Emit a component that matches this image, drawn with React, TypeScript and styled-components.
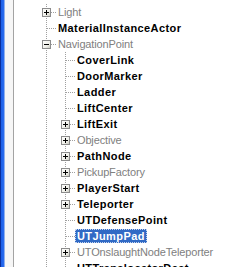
import styled, { createGlobalStyle } from 'styled-components'

interface Node {
  depth: number
  label: string
  bold?: boolean
  toggle?: 'plus' | 'minus'
  selected?: boolean
}

const nodes: Node[] = [
  { depth: 0, label: 'Light', toggle: 'plus' },
  { depth: 0, label: 'MaterialInstanceActor', bold: true },
  { depth: 0, label: 'NavigationPoint', toggle: 'minus' },
  { depth: 1, label: 'CoverLink', bold: true },
  { depth: 1, label: 'DoorMarker', bold: true },
  { depth: 1, label: 'Ladder', bold: true },
  { depth: 1, label: 'LiftCenter', bold: true },
  { depth: 1, label: 'LiftExit', bold: true, toggle: 'plus' },
  { depth: 1, label: 'Objective', toggle: 'plus' },
  { depth: 1, label: 'PathNode', bold: true, toggle: 'plus' },
  { depth: 1, label: 'PickupFactory', toggle: 'plus' },
  { depth: 1, label: 'PlayerStart', bold: true, toggle: 'plus' },
  { depth: 1, label: 'Teleporter', bold: true, toggle: 'plus' },
  { depth: 1, label: 'UTDefensePoint', bold: true },
  { depth: 1, label: 'UTJumpPad', bold: true, selected: true },
  { depth: 1, label: 'UTOnslaughtNodeTeleporter', toggle: 'plus' },
  { depth: 1, label: 'UTTranslocatorDest', bold: true },
]

const GlobalStyle = createGlobalStyle`
  html, body {
    margin: 0;
    padding: 0;
    background: #ffffff;
  }
  body {
    font-family: "Liberation Sans", Arial, sans-serif;
  }
`

function ToggleBox({ kind }: { kind: 'plus' | 'minus' }) {
  return (
    <svg width="9" height="9" viewBox="0 0 9 9" shapeRendering="crispEdges">
      <defs>
        <linearGradient id={`tb-${kind}`} x1="0" y1="0" x2="1" y2="1">
          <stop offset="0" stopColor="#ffffff" />
          <stop offset="0.6" stopColor="#f0f0ea" />
          <stop offset="1" stopColor="#c6c6bc" />
        </linearGradient>
      </defs>
      <rect x="0.5" y="0.5" width="8" height="8" fill={`url(#tb-${kind})`} stroke="#8c8c8c" />
      <rect x="2" y="4" width="5" height="1" fill="#000000" />
      {kind === 'plus' && <rect x="4" y="2" width="1" height="5" fill="#000000" />}
    </svg>
  )
}

function App() {
  return (
    <>
      <GlobalStyle />
      <Window>
        <FrameEdge />
        <Gutter />
        <Tree>
          {nodes.map((n) => (
            <Row key={n.label}>
              {Array.from({ length: n.depth }).map((_, i) => (
                <Guide key={i} />
              ))}
              <Connector>{n.toggle && <ToggleBox kind={n.toggle} />}</Connector>
              <Label $bold={!!n.bold} $selected={!!n.selected}>
                {n.label}
              </Label>
            </Row>
          ))}
        </Tree>
      </Window>
    </>
  )
}

const Window = styled.div`
  display: flex;
  width: 248px;
  height: 267px;
  overflow: hidden;
  background: #ffffff;
`

const FrameEdge = styled.div`
  flex: 0 0 5px;
  background: linear-gradient(
    to right,
    #0a2d9c 0,
    #0a2d9c 1px,
    #1c5fe6 1px,
    #2a6cf0 4px,
    #8fb0ec 4px,
    #8fb0ec 5px
  );
`

const Gutter = styled.div`
  flex: 0 0 8px;
  background: #f6f6f6;
  border-right: 1px solid #a3a3a3;
`

const Tree = styled.div`
  flex: 1;
  padding: 4px 0 0 23px;
  overflow: hidden;
`

const Row = styled.div`
  display: flex;
  align-items: center;
  height: 16px;
  white-space: nowrap;
`

const dotsDown = 'repeating-linear-gradient(to bottom, #a0a0a0 0 1px, transparent 1px 2px)'
const dotsAcross = 'repeating-linear-gradient(to right, #a0a0a0 0 1px, transparent 1px 2px)'

const Guide = styled.div`
  flex: 0 0 19px;
  align-self: stretch;
  background-image: ${dotsDown};
  background-size: 1px 100%;
  background-position: 9px 0;
  background-repeat: no-repeat;
`

const Connector = styled.div`
  flex: 0 0 19px;
  align-self: stretch;
  display: flex;
  align-items: flex-start;
  padding: 4px 0 0 5px;
  box-sizing: border-box;
  background-image: ${dotsDown}, ${dotsAcross};
  background-size: 1px 100%, 9px 1px;
  background-position: 9px 0, 10px 8px;
  background-repeat: no-repeat;

  svg {
    display: block;
  }
`

const Label = styled.span<{ $bold: boolean; $selected: boolean }>`
  display: inline-block;
  height: 14px;
  line-height: 14px;
  padding: 0 2px;
  box-sizing: border-box;
  font-size: 11px;
  font-weight: ${(p) => (p.$bold ? 700 : 400)};
  letter-spacing: ${(p) => (p.$bold ? '0.4px' : '-0.15px')};
  color: ${(p) => (p.$selected ? '#ffffff' : p.$bold ? '#000000' : '#808080')};
  background: ${(p) => (p.$selected ? '#316ac5' : 'transparent')};
  outline: ${(p) => (p.$selected ? '1px dotted #c8d6ee' : 'none')};
  outline-offset: -1px;
`

export default App
